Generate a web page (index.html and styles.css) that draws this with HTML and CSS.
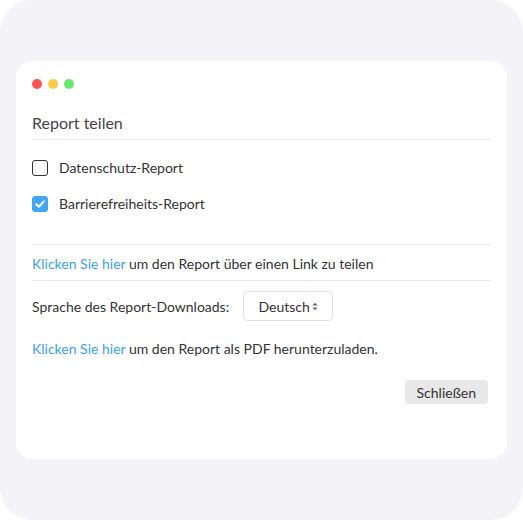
FILE: index.html
```html
<html>
<head>
    <meta charset="UTF-8" />
    <meta name="viewport" content="width=device-width, initial-scale=1.0" />
    <title>Report teilen</title>
    <link rel="stylesheet" href="styles.css">
</head>
<body>
    <div class="frame">
        <div class="card">
            <div class="dots">
                <span class="dot red"></span>
                <span class="dot yellow"></span>
                <span class="dot green"></span>
            </div>

            <h2 class="title">Report teilen</h2>

            <div class="options">
                <label class="option">
                    <span class="box"></span>
                    Datenschutz-Report
                </label>
                <label class="option">
                    <span class="box checked">
                        <svg width="12" height="12" viewBox="0 0 12 12"><path d="M2.2 6.3 L4.8 8.8 L9.8 3.4" fill="none" stroke="#fff" stroke-width="2" stroke-linecap="round" stroke-linejoin="round"/></svg>
                    </span>
                    Barrierefreiheits-Report
                </label>
            </div>

            <p class="line share"><a href="#">Klicken Sie hier</a> um den Report über einen Link zu teilen</p>

            <div class="lang">
                <span>Sprache des Report-Downloads:</span>
                <div class="select">
                    Deutsch
                    <svg width="6" height="9" viewBox="0 0 6 9"><path d="M0.5 3.6 L3 0.8 L5.5 3.6 Z M0.5 5.4 L3 8.2 L5.5 5.4 Z" fill="#666"/></svg>
                </div>
            </div>

            <p class="line"><a href="#">Klicken Sie hier</a> um den Report als PDF herunterzuladen.</p>

            <div class="actions">
                <button class="close">Schließen</button>
            </div>
        </div>
    </div>
</body>
</html>
```

FILE: styles.css
```css
body {
    margin: 0;
    background: #fff;
    font-family: Lato, "Open Sans", sans-serif;
    color: #333;
}
.frame {
    width: 523px;
    height: 520px;
    box-sizing: border-box;
    padding: 61px 16px 0 16px;
    background: #f4f4f8;
    border-radius: 32px;
}
.card {
    height: 398px;
    box-sizing: border-box;
    padding: 18px 16px 0 16px;
    background: #fff;
    border-radius: 16px;
}
.dots {
    display: flex;
    gap: 6px;
}
.dot {
    width: 10px;
    height: 10px;
    border-radius: 50%;
}
.red { background: #ff5252; }
.yellow { background: #ffc94a; }
.green { background: #69e86e; }
.title {
    margin: 24px 0 0 0;
    padding-bottom: 6px;
    font-size: 16px;
    font-weight: normal;
    line-height: 20px;
    color: #444;
    border-bottom: 1px solid #e8e8ec;
}
.options {
    display: flex;
    flex-direction: column;
    gap: 16px;
    padding: 18px 0 30px 0;
    border-bottom: 1px solid #e8e8ec;
}
.option {
    display: flex;
    align-items: center;
    gap: 11px;
    font-size: 14px;
    line-height: 20px;
}
.box {
    width: 16px;
    height: 16px;
    box-sizing: border-box;
    border: 1.5px solid #333;
    border-radius: 3px;
    display: flex;
    align-items: center;
    justify-content: center;
}
.box.checked {
    background: #42a5f5;
    border-color: #42a5f5;
}
.line {
    margin: 0;
    font-size: 14px;
    line-height: 20px;
    padding: 18px 0 8px 0;
}
.line.share {
    padding: 9px 0 6px 0;
    border-bottom: 1px solid #e8e8ec;
}
.line a {
    color: #3aa1f2;
    text-decoration: none;
}
.lang {
    display: flex;
    align-items: center;
    gap: 14px;
    padding-top: 10px;
    font-size: 14px;
}
.select {
    width: 90px;
    height: 30px;
    box-sizing: border-box;
    border: 1px solid #ddd;
    border-radius: 4px;
    display: flex;
    align-items: center;
    justify-content: center;
    gap: 2px;
}
.actions {
    display: flex;
    justify-content: flex-end;
    padding: 13px 3px 0 0;
}
.close {
    height: 24px;
    padding: 0 12px;
    border: none;
    border-radius: 4px;
    background: #e8e8e8;
    font-family: Lato, sans-serif;
    font-size: 14px;
    color: #333;
}
```
